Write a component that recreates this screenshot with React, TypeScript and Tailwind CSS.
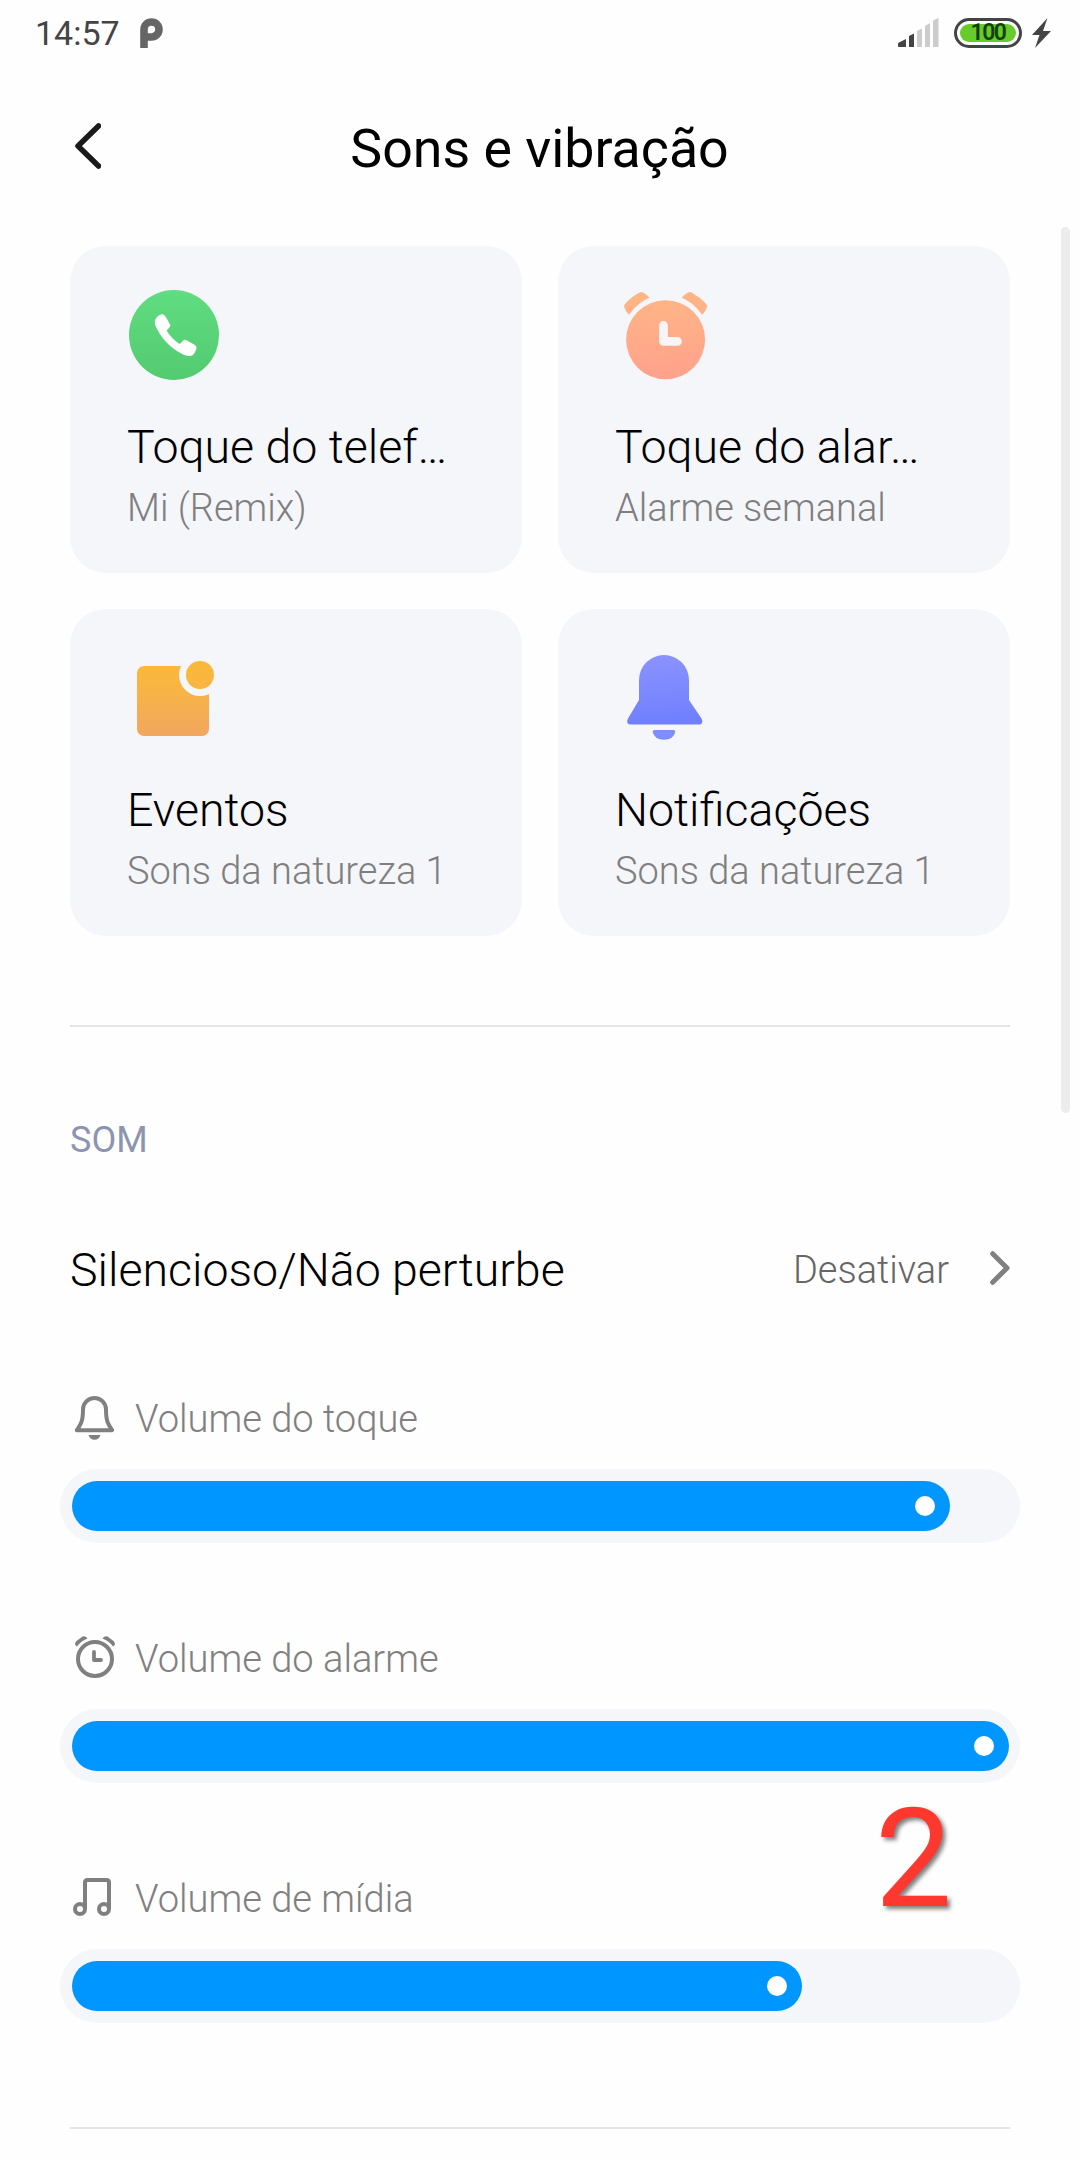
import React from "react";

type Tone = {
  title: string;
  subtitle: string;
  icon: React.ReactNode;
};

type Volume = {
  label: string;
  // filled part of the track in px
  fill: number;
  icon: React.ReactNode;
};

const PhoneIcon = () => (
  <svg className="ml-px" width="92" height="92" viewBox="0 0 92 92">
    <defs>
      <linearGradient id="phone" x1="0" y1="0" x2="0" y2="1">
        <stop offset="0" stopColor="#60dc81" />
        <stop offset="1" stopColor="#53cb70" />
      </linearGradient>
    </defs>
    <circle cx="46" cy="46" r="45" fill="url(#phone)" />
    <path
      d="M29.5 27.5Q33 24.5 35.500 25.500L37 27Q40 31 42.500 36.500Q42 38 38.500 41.500Q43 49 51.500 55Q54 53 56 50.800Q57 50.500 58.500 51.300L67 56Q69 57.500 68.500 59.500Q67.500 63 65 66Q61 68.500 54 65Q35 55 27 35.500Q26 30.500 29.500 27.500Z"
      fill="#fff"
    />
  </svg>
);

const AlarmIcon = () => (
  <svg className="ml-px" width="92" height="92" viewBox="0 0 92 92">
    <defs>
      <linearGradient id="alarm" gradientUnits="userSpaceOnUse" x1="46" y1="3" x2="50" y2="90">
        <stop offset="0" stopColor="#ffb685" />
        <stop offset="1" stopColor="#ffa18c" />
      </linearGradient>
    </defs>
    <g fill="url(#alarm)">
      <circle cx="49.600" cy="50.700" r="39.500" />
      <path d="M8.200 18Q7.800 16.500 9 15Q15 8 24 3.300Q25.500 2.600 27 3.500Q31 5.500 33.500 8.700Q22 13 13 25.700Q9.500 22.500 8.200 18Z" />
      <path d="M91 18Q91.400 16.500 90.200 15Q84 8 75.200 3.300Q73.700 2.600 72.200 3.500Q68.200 5.500 65.700 8.700Q77 13 86.200 25.700Q89.700 22.500 91 18Z" />
    </g>
    <path d="M47.500 36.500V52.300H61.500" fill="none" stroke="#f9f4f6" strokeWidth="8.800" strokeLinecap="round" strokeLinejoin="round" />
  </svg>
);

const EventIcon = () => (
  <svg className="ml-px" width="92" height="92" viewBox="0 0 92 92">
    <defs>
      <linearGradient id="event" gradientUnits="userSpaceOnUse" x1="46" y1="9" x2="46" y2="84">
        <stop offset="0" stopColor="#fbb939" />
        <stop offset="0.250" stopColor="#f9b640" />
        <stop offset="1" stopColor="#f2a75f" />
      </linearGradient>
    </defs>
    <rect x="9" y="14" width="72" height="70" rx="7" fill="url(#event)" />
    <circle cx="72" cy="23" r="21" fill="#f5f6fa" />
    <circle cx="72" cy="23" r="14" fill="url(#event)" />
  </svg>
);

const BellIcon = () => (
  <svg className="ml-px" width="92" height="92" viewBox="0 0 92 92">
    <defs>
      <linearGradient id="bell" x1="0" y1="0" x2="0.100" y2="1">
        <stop offset="0" stopColor="#8c93ff" />
        <stop offset="1" stopColor="#7080fd" />
      </linearGradient>
    </defs>
    <path
      d="M23 28A25 25 0 0 1 73 28V48L85.500 66.500Q87 69 86 71Q85.200 72.500 83 72.500H14.500Q12.300 72.500 11.500 71Q10.600 69 12 66.500L23 48Z"
      fill="url(#bell)"
    />
    <path d="M38.500 78H57.500Q59.500 78 59.200 80Q57.500 87.700 48 87.700Q38.500 87.700 36.700 80Q36.500 78 38.500 78Z" fill="#7f8df8" />
  </svg>
);

const SmallBell = () => (
  <svg width="48" height="48" viewBox="0 0 48 48" fill="none" stroke="#808080">
    <path d="M13 17.500A11.500 11.500 0 0 1 36 17.500C36 29 38 32 42.200 38.200H6.800C11 32 13 29 13 17.500Z" strokeWidth="4" strokeLinejoin="round" />
    <path d="M18.500 43H30.500Q29 47.700 24.500 47.700Q20 47.700 18.500 43Z" fill="#808080" stroke="none" />
  </svg>
);

const SmallAlarm = () => (
  <svg width="48" height="48" viewBox="0 0 48 48" fill="none" stroke="#808080">
    <circle cx="25" cy="27" r="17" strokeWidth="4" />
    <path d="M24 20V28H31" strokeWidth="3.800" strokeLinecap="round" strokeLinejoin="round" />
    <g fill="#808080" stroke="none">
      <path d="M5 12Q5 10.500 6.500 9L12.500 4.500Q15.500 3.500 17.500 6.500Q11 9 7 14.500Q5.300 13.500 5 12Z" />
      <path d="M45 12Q45 10.500 43.500 9L37.500 4.500Q34.500 3.500 32.500 6.500Q39 9 43 14.500Q44.700 13.500 45 12Z" />
    </g>
  </svg>
);

const SmallNote = () => (
  <svg width="48" height="48" viewBox="0 0 48 48" fill="none" stroke="#808080" strokeWidth="4">
    <circle cx="10" cy="37" r="5" />
    <circle cx="34" cy="37" r="5" />
    <path d="M15 37V10.500Q15 8 17.500 8H36.500Q39 8 39 10.500V37" />
  </svg>
);

const tones: Tone[] = [
  { title: "Toque do telef…", subtitle: "Mi (Remix)", icon: <PhoneIcon /> },
  { title: "Toque do alar…", subtitle: "Alarme semanal", icon: <AlarmIcon /> },
  { title: "Eventos", subtitle: "Sons da natureza 1", icon: <EventIcon /> },
  { title: "Notificações", subtitle: "Sons da natureza 1", icon: <BellIcon /> },
];

const volumes: Volume[] = [
  { label: "Volume do toque", fill: 878, icon: <SmallBell /> },
  { label: "Volume do alarme", fill: 937, icon: <SmallAlarm /> },
  { label: "Volume de mídia", fill: 730, icon: <SmallNote /> },
];

const StatusBar = () => (
  <div className="flex h-[66px] items-center pl-[35px] pr-[29px]">
    <span className="text-[34px] leading-[40px] text-[#444]">14:57</span>
    <svg className="ml-5" width="23" height="30" viewBox="0 0 23 30" fill="none">
      <path d="M4 30V11.500A7.500 7.500 0 1 1 11.500 19H4" stroke="#666" strokeWidth="7.600" />
    </svg>
    <div className="ml-auto flex items-center">
      <svg width="41" height="30" viewBox="0 0 41 30">
        <path d="M0 26Q0 25 1 24.500L8 21V29H1Q0 29 0 28Z" fill="#444" />
        <path d="M11 18L16 15.500V29H11Z" fill="#444" />
        <path d="M19 13L24 10.500V29H19ZM27 8L32 5V29H27ZM35 2.500L40.500 0V29H35Z" fill="#ccc" />
      </svg>
      <div className="ml-[15px] flex h-[30px] w-[68px] items-center justify-center rounded-full border-[3px] border-[#444]">
        <div className="flex h-[18px] w-14 items-center justify-center rounded-full bg-[#66cc2b]">
          <span className="text-[23px] font-semibold leading-[18px] tracking-[-1.5px] text-[#14400a]">100</span>
        </div>
      </div>
      <svg className="ml-[10px]" width="19" height="30" viewBox="0 0 19 30">
        <path d="M15.500 0L0 17H7.500L3 30L19 13H11Z" fill="#444" />
      </svg>
    </div>
  </div>
);

const ToneCard = ({ title, subtitle, icon }: Tone) => (
  <div className="h-[327px] rounded-[36px] bg-[#f5f6fa] pl-[57px] pt-[43px]">
    {icon}
    <p className="mt-9 whitespace-nowrap text-[46.5px] font-light leading-[60px] text-black">{title}</p>
    <p className="mt-[7px] whitespace-nowrap text-[38px] font-light leading-[48px] text-[#7f7f80]">{subtitle}</p>
  </div>
);

const VolumeRow = ({ label, fill, icon }: Volume) => (
  <div className="h-[240px]">
    <div className="flex h-[77px] items-start pl-[10px]">
      {icon}
      <span className="ml-[17px] mt-[3px] text-[38.1px] font-light leading-[48px] text-[#808080]">{label}</span>
    </div>
    <div className="flex h-[74px] w-[960px] items-center rounded-full bg-[#f4f6fa] pl-3">
      <div className="flex h-[50px] items-center justify-end rounded-full bg-[#0096ff] pr-[15px]" style={{ width: fill }}>
        <div className="h-5 w-5 rounded-full bg-white" />
      </div>
    </div>
  </div>
);

const App = () => {
  return (
    <main className="relative h-[2160px] w-[1080px] overflow-hidden bg-[#fefefe] font-['Roboto',sans-serif]">
      <StatusBar />
      <header className="flex h-[160px] items-center px-[75px]">
        <svg width="26" height="46" viewBox="0 0 26 46" fill="none">
          <path d="M23.500 3L3 23L23.500 43" stroke="#1a1a1a" strokeWidth="5.500" strokeLinecap="round" strokeLinejoin="round" />
        </svg>
        <h1 className="mr-[27px] grow pt-[5px] text-center text-[53.7px] leading-[64px] text-black">Sons e vibração</h1>
      </header>

      <section className="grid grid-cols-2 gap-9 px-[70px] pt-5">
        {tones.map((tone) => (
          <ToneCard key={tone.title} {...tone} />
        ))}
      </section>

      <hr className="mx-[70px] mt-[89px] border-t-2 border-[#e5e5e5]" />

      <h2 className="mt-[89px] px-[70px] text-[36px] leading-[48px] text-[#8c94b0]">SOM</h2>

      <div className="mt-[76px] flex h-[60px] items-center pl-[70px] pr-[70px]">
        <span className="text-[46.5px] font-light leading-[60px] text-black">Silencioso/Não perturbe</span>
        <span className="ml-auto text-[38px] font-light leading-[60px] text-[#666]">Desativar</span>
        <svg className="-mt-1 ml-[41px]" width="20" height="34" viewBox="0 0 20 34" fill="none">
          <path d="M2.700 2.700L17 17L2.700 31.300" stroke="#808080" strokeWidth="5" strokeLinecap="round" strokeLinejoin="round" />
        </svg>
      </div>

      <section className="mt-[92px] pl-[60px]">
        {volumes.map((volume) => (
          <VolumeRow key={volume.label} {...volume} />
        ))}
      </section>

      <hr className="mx-[70px] mt-[15px] border-t-2 border-[#e5e5e5]" />

      {/* scrollbar */}
      <div className="absolute right-[10px] top-[227px] h-[886px] w-[9px] rounded-full bg-[#ececec]" />

      {/* step marker */}
      <span className="absolute left-[875px] top-[1777px] text-[137px] leading-[164px] text-[#ff382f] [text-shadow:3px_3px_4px_rgba(0,0,0,0.5)]">
        2
      </span>
    </main>
  );
};

export default App;
